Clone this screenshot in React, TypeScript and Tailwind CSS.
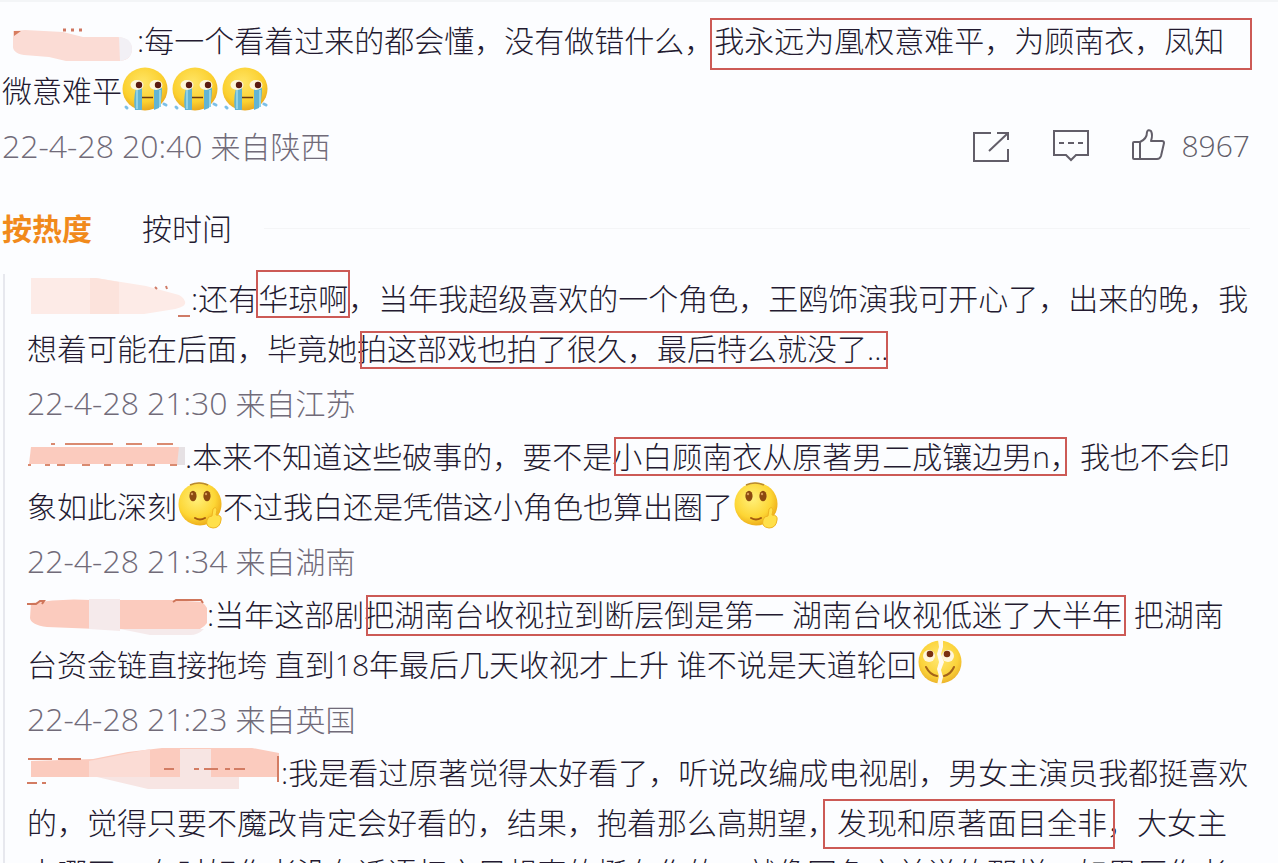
import type { ReactNode } from 'react';

function Mark({ box, className = '', children }: { box: string; className?: string; children: ReactNode }) {
  return (
    <mark className={`relative bg-transparent text-inherit ${className}`}>
      {children}
      <span className={`pointer-events-none absolute border-2 border-[#cc5a56] ${box}`}></span>
    </mark>
  );
}

function CryEmoji() {
  return (
    <svg viewBox="0 0 50 50" className="inline-block h-[50px] w-[50px] align-top" role="img" aria-label="泪">
      <defs>
        <radialGradient id="cryFace" cx="45%" cy="35%" r="65%">
          <stop offset="0" stopColor="#ffe566" />
          <stop offset="0.7" stopColor="#fbd02f" />
          <stop offset="1" stopColor="#e9a91f" />
        </radialGradient>
      </defs>
      <ellipse cx="23" cy="23" rx="22.500" ry="21.500" fill="url(#cryFace)" />
      <path d="M14 22h6v22h-7q-2-10 1-22zM32 22h8q0 12-3 20l-5 2z" fill="#62b4d3" />
      <path d="M15 24v19M38 24v17" stroke="#8fd2e6" strokeWidth="2" />
      <ellipse cx="15" cy="19" rx="6.500" ry="5" fill="#fff6dc" />
      <ellipse cx="34" cy="19" rx="6.500" ry="5" fill="#fff6dc" />
      <circle cx="17" cy="19" r="3.200" fill="#5b1a12" />
      <circle cx="36" cy="19" r="3.200" fill="#5b1a12" />
      <path d="M20 31.500h11" stroke="#6b3a12" strokeWidth="1.500" />
      <path d="M4 41l1 1M42 38l2 1" stroke="#7cc0e8" strokeWidth="3" strokeLinecap="round" />
    </svg>
  );
}

function SmileEmoji() {
  return (
    <svg viewBox="0 0 46 50" className="inline-block h-[50px] w-[46px] align-top" role="img" aria-label="苦涩">
      <defs>
        <radialGradient id="smileFace" cx="42%" cy="38%" r="62%">
          <stop offset="0" stopColor="#fff07a" />
          <stop offset="0.7" stopColor="#fdd635" />
          <stop offset="1" stopColor="#eeaf1c" />
        </radialGradient>
      </defs>
      <circle cx="23" cy="22" r="21.500" fill="url(#smileFace)" />
      <path d="M13 3Q22-1 31 3" stroke="#b9892f" strokeWidth="1.500" fill="none" />
      <ellipse cx="16" cy="14" rx="3.600" ry="5.200" fill="#8c4a10" />
      <ellipse cx="30" cy="14" rx="3.600" ry="5.200" fill="#8c4a10" />
      <circle cx="15" cy="12" r="1.200" fill="#d79a58" />
      <circle cx="29" cy="12" r="1.200" fill="#d79a58" />
      <path d="M18 36q5 3 10 0" stroke="#a35a10" strokeWidth="2" fill="none" strokeLinecap="round" />
      <path d="M36 27q3-3 4 1l-1 5q6 0 5 5-1 8-8 8-8-1-6-8 1-4 5-4z" fill="#ffe04a" stroke="#efb420" />
    </svg>
  );
}

function SplitEmoji() {
  return (
    <svg viewBox="0 0 46 50" className="inline-block h-[50px] w-[46px] align-top" role="img" aria-label="裂开">
      <defs>
        <radialGradient id="splitFace" cx="48%" cy="40%" r="62%">
          <stop offset="0" stopColor="#ffe873" />
          <stop offset="0.7" stopColor="#fbd33a" />
          <stop offset="1" stopColor="#eab02a" />
        </radialGradient>
      </defs>
      <circle cx="23" cy="22" r="21.500" fill="url(#splitFace)" />
      <circle cx="12" cy="16" r="6" fill="#fff6dc" />
      <circle cx="31" cy="16" r="6" fill="#fff6dc" />
      <circle cx="13" cy="14" r="3.300" fill="#7a3010" />
      <circle cx="30" cy="14" r="3.300" fill="#7a3010" />
      <path d="M9 27q4 8 11 9M37 27q-3 7-10 9" stroke="#a4631a" strokeWidth="2" fill="none" strokeLinecap="round" />
      <path d="M21 0l5 0 0 7-2 7 3 8-3 8 2 7-2 8h-4l2-9-2-7 2-7-2-8 2-7z" fill="#fffaf0" />
    </svg>
  );
}

function Smear({ width, children }: { width: number; children: ReactNode }) {
  return (
    <svg viewBox={`0 0 ${width} 50`} style={{ width }} className="inline-block h-[50px] align-top" aria-hidden="true">
      {children}
    </svg>
  );
}

function Meta({ date, time, place }: { date: string; time: string; place: string }) {
  return (
    <div className="flex items-baseline gap-2 text-[#716b79]">
      <span className="text-[32px]">{date}</span>
      <span className="text-[32px]">{time}</span>
      <span>{place}</span>
    </div>
  );
}

function Reply({ date, time, place, children }: { date: string; time: string; place: string; children: ReactNode }) {
  return (
    <article>
      <p>{children}</p>
      <div className="flex h-[58px] items-center">
        <Meta date={date} time={time} place={place} />
      </div>
    </article>
  );
}

export default function App() {
  return (
    <main className="h-screen overflow-hidden border-t-2 border-[#f3f5f7] bg-[#fcfdff] font-['Open_Sans','Noto_Sans_CJK_SC',sans-serif] text-[30px] leading-[50px] font-light text-[#231a30]">
      <article className="pt-[14px] pr-7 pl-[2px]">
        <p>
          <Smear width={135}>
            <path d="M11 15l12-1 38 2 20 5h35q12 1 14 11 0 12-12 13H64l-17-4-25-2q-12-2-11-10z" fill="#fbdcd5" />
            <path d="M117 21q13 1 13 12 0 10-12 12z" fill="#f2f0f5" />
            <path d="M12 20v-5h7z" fill="#d77d60" />
            <path d="M61 14h3M69 14h3M77 14h3" stroke="#cf7660" strokeWidth="3" />
          </Smear>
          :每一个看着过来的都会懂，没有做错什么，
          <Mark box="-top-[2px] -right-[28px] -left-[4px] h-[52px]">我永远为凰权意难平，为顾南衣，凤知</Mark>
          微意难平
          <CryEmoji />
          <CryEmoji />
          <CryEmoji />
        </p>
        <div className="flex h-[60px] items-center justify-between">
          <Meta date="22-4-28" time="20:40" place="来自陕西" />
          <div className="flex items-center gap-10 text-[#625e69]">
            <button type="button" aria-label="转发">
              <svg viewBox="0 0 40 36" className="h-9 w-10" fill="none" stroke="currentColor" strokeWidth="2">
                <path d="M21 5H4v28h34V21M27 5h11v7M19 23L37 6" />
              </svg>
            </button>
            <button type="button" aria-label="评论">
              <svg viewBox="0 0 40 36" className="h-9 w-10" fill="none" stroke="currentColor" strokeWidth="2">
                <path d="M4 3h34v24H26l-5 5-5-5H4z" />
                <path d="M9 15h5M18 15h6M28 15h5" />
              </svg>
            </button>
            <button type="button" className="flex items-center gap-4">
              <svg viewBox="0 0 36 36" className="h-9 w-9" fill="none" stroke="currentColor" strokeWidth="2" strokeLinejoin="round">
                <path d="M4 14h6v17H4q-1 0-1-1V15q0-1 1-1zM10 14q7-3 7-10 1-3 4-1 2 4 0 10h11q2 0 2 2l-3 13q-1 3-4 3H10" />
              </svg>
              <span>8967</span>
            </button>
          </div>
        </div>
      </article>

      <nav className="flex h-[98px] items-center gap-8 pt-[7px] pr-7 pl-[2px]">
        <div className="flex gap-[50px]">
          <button type="button" className="font-bold text-[#f18a1c]">按热度</button>
          <button type="button">按时间</button>
        </div>
        <span className="h-px flex-1 bg-[#f4f5f7]"></span>
      </nav>

      <section className="ml-[3px] border-l-2 border-[#e7e8ee] pr-7 pl-[22px]">
        <Reply date="22-4-28" time="21:30" place="来自江苏">
          <Smear width={164}>
            <path d="M4 4h65l50 8 33 9q7 4 6 9-2 4-16 6l-25 4H4z" fill="#fdebe7" />
            <path d="M63 4h6l23 4v32H63z" fill="#fce3dc" />
            <path d="M128 13l2 2M139 12l1 3M151 42h12" stroke="#cf7b67" strokeWidth="2" />
          </Smear>
          :还有<Mark box="-top-[8px] -right-[2px] -left-[2px] h-[48px]">华琼啊</Mark>
          ，当年我超级喜欢的一个角色，王鸥饰演我可开心了，出来的晚，我想着可能在后面，毕竟她
          <Mark box="top-[3px] right-0 left-[3px] h-[38px]">拍这部戏也拍了很久，最后特么就没了...</Mark>
        </Reply>
        <Reply date="22-4-28" time="21:34" place="来自湖南">
          <Smear width={158}>
            <path d="M4 15h155v17H2z" fill="#fbcbbe" />
            <path d="M152 15h10v18h-12z" fill="#e6e1e4" />
            <path d="M24 12h4M38 12h48M99 12h16M130 12h16M1 33h3M18 33h5M30 33h8M55 33h8M77 33h7M99 33h7M120 33h8M143 33h7" stroke="#d98a70" strokeWidth="2" />
          </Smear>
          .本来不知道这些破事的，要不是
          <Mark box="top-[1px] right-[13px] left-[2px] h-[39px]">小白顾南衣从原著男二成镶边男n，</Mark>
          我也不会印象如此深刻
          <SmileEmoji />
          不过我白还是凭借这小角色也算出圈了
          <SmileEmoji />
        </Reply>
        <Reply date="22-4-28" time="21:23" place="来自英国">
          <Smear width={180}>
            <path d="M4 13q30-5 60-3h80l31 2q7 6 7 14t-9 13H70l-50-2q-16-2-17-9z" fill="#fbcbbe" />
            <path d="M62 9h31v32l-31-2zM93 39h84q-6 6-14 6h-40z" fill="#f5eaeb" />
            <path d="M0 14h9l4-3h4l-2 3M146 12l3-2h25l2 3" stroke="#cf765b" strokeWidth="2" fill="none" />
          </Smear>
          :当年这部剧
          <Mark className="mr-1" box="top-[1px] -right-[4px] left-[2px] h-[41px]">把湖南台收视拉到断层倒是第一 湖南台收视低迷了大半年</Mark>
          {' '}把湖南台资金链直接拖垮 直到18年最后几天收视才上升 谁不说是天道轮回
          <SplitEmoji />
        </Reply>
        <article>
          <p>
            <Smear width={254}>
              <path d="M4 13l62-2 35-7 34-4h90l27 5v24H4z" fill="#fbcbbe" />
              <path d="M62 13l61-12v28H62z" fill="#fbdcd5" />
              <path d="M153 1h31v28h-31zM70 29h142v12H121z" fill="#f7e5e3" />
              <path d="M1 11h24M31 11h23M137 21h10M167 21h5M177 21h14M198 21h5M207 21h11M0 35h10M15 35h4M251 8v26" stroke="#d37c63" strokeWidth="2" />
            </Smear>
            :我是看过原著觉得太好看了，听说改编成电视剧，男女主演员我都挺喜欢的，觉得只要不魔改肯定会好看的，结果，抱着那么高期望，
            <Mark box="-top-[3px] -right-[8px] -left-[14px] h-[50px]">发现和原著面目全非</Mark>
            ，大女主去哪了，有时好作者没有话语权之只想真的挺在作的，就像网色之前说的那样，如果原作者
          </p>
        </article>
      </section>
    </main>
  );
}
